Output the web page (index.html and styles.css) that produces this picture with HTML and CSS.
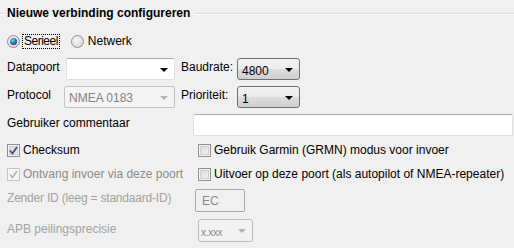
FILE: index.html
```html
<!DOCTYPE html>
<html>
<head>
<meta charset="utf-8">
<link rel="stylesheet" href="styles.css">
</head>
<body>
<div class="panel">
  <div class="legend">
    <span class="line-left"></span>
    <span class="title">Nieuwe verbinding configureren</span>
    <span class="line-right"></span>
  </div>

  <div class="row radios">
    <label class="radio-item">
      <span class="radio checked"><span class="dot"></span></span>
      <span class="focus">Serieel</span>
    </label>
    <label class="radio-item second">
      <span class="radio"></span>
      <span class="rtext">Netwerk</span>
    </label>
  </div>

  <div class="row r-data">
    <span class="lbl w-data">Datapoort</span>
    <span class="combo edit w-port"><span class="arrow"></span></span>
    <span class="lbl w-baud">Baudrate:</span>
    <span class="combo btn w-small"><span class="val">4800</span><span class="arrow"></span></span>
  </div>

  <div class="row r-proto">
    <span class="lbl w-proto">Protocol</span>
    <span class="combo disabled w-protoc"><span class="val">NMEA 0183</span><span class="arrow grey"></span></span>
    <span class="lbl w-baud">Prioriteit:</span>
    <span class="combo btn w-small"><span class="val">1</span><span class="arrow"></span></span>
  </div>

  <div class="row r-comment">
    <span class="lbl w-comment">Gebruiker commentaar</span>
    <span class="textbox"></span>
  </div>

  <div class="row r-check1">
    <label class="check-item w-c1">
      <span class="box"><svg width="9" height="9" viewBox="0 0 9 9"><path d="M1 4.5 L3.5 7.5 L8 1" fill="none" stroke="#3c4f86" stroke-width="1.8"/></svg></span>
      <span class="ctext">Checksum</span>
    </label>
    <label class="check-item">
      <span class="box"></span>
      <span class="ctext">Gebruik Garmin (GRMN) modus voor invoer</span>
    </label>
  </div>

  <div class="row r-check2">
    <label class="check-item w-c1 dis">
      <span class="box dbox"><svg width="9" height="9" viewBox="0 0 9 9"><path d="M1 4.5 L3.5 7.5 L8 1" fill="none" stroke="#b4b4b4" stroke-width="1.6"/></svg></span>
      <span class="ctext">Ontvang invoer via deze poort</span>
    </label>
    <label class="check-item">
      <span class="box"></span>
      <span class="ctext">Uitvoer op deze poort (als autopilot of NMEA-repeater)</span>
    </label>
  </div>

  <div class="row r-zender">
    <span class="lbl dim w-zender">Zender ID (leeg = standaard-ID)</span>
    <span class="ec">EC</span>
  </div>

  <div class="row r-apb">
    <span class="lbl dim w-apb">APB peilingsprecisie</span>
    <span class="combo disabled2 w-apbc"><span class="val small">x.xxx</span><span class="arrow grey"></span></span>
  </div>
</div>
</body>
</html>
```

FILE: styles.css
```css
html, body {
  margin: 0;
  padding: 0;
  background: #f0f0f0;
}
body {
  width: 514px;
  height: 248px;
  overflow: hidden;
  font-family: "Liberation Sans", Arial, sans-serif;
  font-size: 12px;
  color: #000;
}
.panel {
  display: flex;
  flex-direction: column;
}
.legend {
  height: 27px;
  display: flex;
  align-items: flex-start;
}
.line-left, .line-right {
  margin-top: 13px;
  height: 1px;
  border-bottom: 1px solid #fff;
  background: #d5dfe5;
}
.line-left { width: 5px; }
.line-right { flex: 1; margin-left: 3px; }
.title {
  font-weight: bold;
  font-size: 12px;
  padding: 6px 2px 0 2px;
  line-height: 14px;
}
.row {
  display: flex;
  align-items: flex-start;
  padding-left: 7px;
}
.radios { height: 28px; align-items: center; }
.radio-item { display: flex; align-items: center; }
.radio-item.second { margin-left: 12px; }
.radio {
  width: 11px;
  height: 11px;
  border-radius: 50%;
  border: 1px solid #8e8f8f;
  background: radial-gradient(circle at 40% 35%, #f4f4f4 0%, #e0e0e0 60%, #cfcfcf 100%);
  display: flex;
  align-items: center;
  justify-content: center;
}
.radio .dot {
  width: 7px;
  height: 7px;
  border-radius: 50%;
  background: radial-gradient(circle at 40% 35%, #8fcdf0 0%, #1a64a0 55%, #0a365c 100%);
}
.focus {
  margin-left: 3px;
  outline: 1px dotted #000;
  outline-offset: 0;
  padding: 0 1px;
  line-height: 13px;
  letter-spacing: -0.5px;
}
.rtext { margin-left: 4px; }

.r-data { margin-top: 3px; height: 22px; }
.r-proto { margin-top: 6px; height: 22px; }
.r-comment { margin-top: 6px; height: 22px; }
.r-check1 { margin-top: 3px; height: 22px; align-items: center; }
.r-check2 { margin-top: 2px; height: 22px; align-items: center; }
.r-zender { margin-top: 4px; height: 23px; }
.r-apb { margin-top: 7px; height: 23px; }

.lbl { padding-top: 3px; line-height: 13px; }
.w-data { width: 59px; }
.w-proto { width: 57px; }
.w-baud { width: 56px; margin-left: 6px; }
.w-comment { width: 186px; }
.w-zender { width: 188px; letter-spacing: -0.2px; }
.w-apb { width: 191px; padding-top: 4px; }
.dim { color: #a3a3a3; }

.combo {
  box-sizing: border-box;
  height: 22px;
  display: flex;
  align-items: center;
  position: relative;
}
.w-port { width: 109px; }
.w-protoc { width: 111px; }
.w-small { width: 63px; }
.w-apbc { width: 55px; height: 23px; }
.combo.edit {
  background: #fff;
  border: 1px solid #dde1e6;
  border-top-color: #abadb3;
  border-radius: 2px;
}
.combo.btn {
  border: 1px solid #707070;
  border-radius: 3px;
  background: linear-gradient(#f2f2f2 0%, #ebebeb 50%, #dddddd 51%, #cfcfcf 100%);
}
.combo.disabled {
  border: 1px solid #c2c5c8;
  border-radius: 2px;
  background: #f4f4f4;
  color: #838383;
}
.combo.disabled2 {
  border: 1px solid #bcbcbc;
  border-radius: 3px;
  background: #f2f2f2;
  color: #8a8a8a;
}
.val { padding-left: 4px; padding-top: 2px; }
.combo.btn .val { color: #000; padding-top: 3px; }
.val.small { font-size: 10px; padding-left: 2px; padding-top: 4px; letter-spacing: -0.3px; }
.arrow {
  position: absolute;
  right: 6px;
  top: 9px;
  width: 0;
  height: 0;
  border-left: 4px solid transparent;
  border-right: 4px solid transparent;
  border-top: 4px solid #000;
}
.combo.btn .arrow { right: 6px; top: 9px; }
.arrow.grey { border-top-color: #b4b4b4; }

.textbox {
  box-sizing: border-box;
  width: 320px;
  height: 22px;
  background: #fff;
  border: 1px solid #dde1e6;
  border-top-color: #abadb3;
  border-radius: 2px;
}

.check-item { display: flex; align-items: center; }
.w-c1 { width: 191px; }
.box {
  box-sizing: border-box;
  width: 13px;
  height: 13px;
  border: 1px solid #8e8f8f;
  background: linear-gradient(135deg, #d9d9d9 0%, #f4f4f4 100%);
  box-shadow: inset 0 0 0 1px #f4f4f4, inset 0 0 0 2px #d0d0d0;
  display: flex;
  align-items: center;
  justify-content: center;
}
.box.dbox {
  border-color: #c5c5c5;
  background: #f4f4f4;
  box-shadow: none;
}
.ctext { margin-left: 3px; line-height: 14px; }
.dis { color: #8c8c8c; }

.ec {
  box-sizing: border-box;
  width: 50px;
  height: 23px;
  border: 1px solid #a8a8a8;
  border-radius: 2px;
  color: #8a8a8a;
  padding: 5px 0 0 6px;
  line-height: 13px;
}
```
